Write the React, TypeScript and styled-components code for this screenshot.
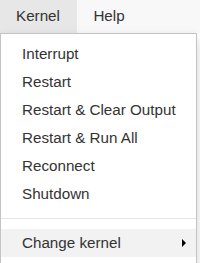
import React from "react";
import styled, { createGlobalStyle } from "styled-components";

const Global = createGlobalStyle`
  html, body {
    margin: 0;
    padding: 0;
    background: #fff;
  }
  body {
    font-family: "Liberation Sans", Arial, Helvetica, sans-serif;
    font-size: 15.2px;
    color: #333;
  }
`;

const Page = styled.div`
  width: 200px;
  height: 263px;
  overflow: hidden;
  position: relative;
`;

const MenuBar = styled.div`
  display: flex;
  height: 33px;
  background: #f8f8f8;
`;

const MenuTab = styled.div<{ $active?: boolean }>`
  padding: 0 17.5px 0 16px;
  line-height: 31px;
  background: ${(p) => (p.$active ? "#e7e7e7" : "transparent")};
  color: #333;
`;

const Dropdown = styled.ul`
  position: absolute;
  top: 33px;
  left: 0;
  width: 195px;
  margin: 0;
  padding: 6px 0;
  list-style: none;
  background: #fff;
  border: 1px solid #c4c4c4;
  box-shadow: 0 6px 12px rgba(0, 0, 0, 0.175);
  z-index: 10;
`;

const Item = styled.li<{ $hover?: boolean }>`
  position: relative;
  padding: 3px 21px;
  line-height: 22px;
  white-space: nowrap;
  color: #333;
  background: ${(p) => (p.$hover ? "#f2f2f2" : "transparent")};
`;

const Divider = styled.li`
  height: 1px;
  margin: 10px 0 9.5px;
  background: #e5e5e5;
`;

const Caret = styled.span`
  position: absolute;
  right: 10px;
  top: 50%;
  margin-top: -4px;
  width: 0;
  height: 0;
  border-top: 4px solid transparent;
  border-bottom: 4px solid transparent;
  border-left: 4px solid #000;
`;

const items = [
  "Interrupt",
  "Restart",
  "Restart & Clear Output",
  "Restart & Run All",
  "Reconnect",
  "Shutdown",
];

export default function App() {
  return (
    <Page>
      <Global />
      <MenuBar>
        <MenuTab $active>Kernel</MenuTab>
        <MenuTab>Help</MenuTab>
      </MenuBar>
      <Dropdown>
        {items.map((t) => (
          <Item key={t}>{t}</Item>
        ))}
        <Divider />
        <Item $hover>
          Change kernel
          <Caret />
        </Item>
      </Dropdown>
    </Page>
  );
}
